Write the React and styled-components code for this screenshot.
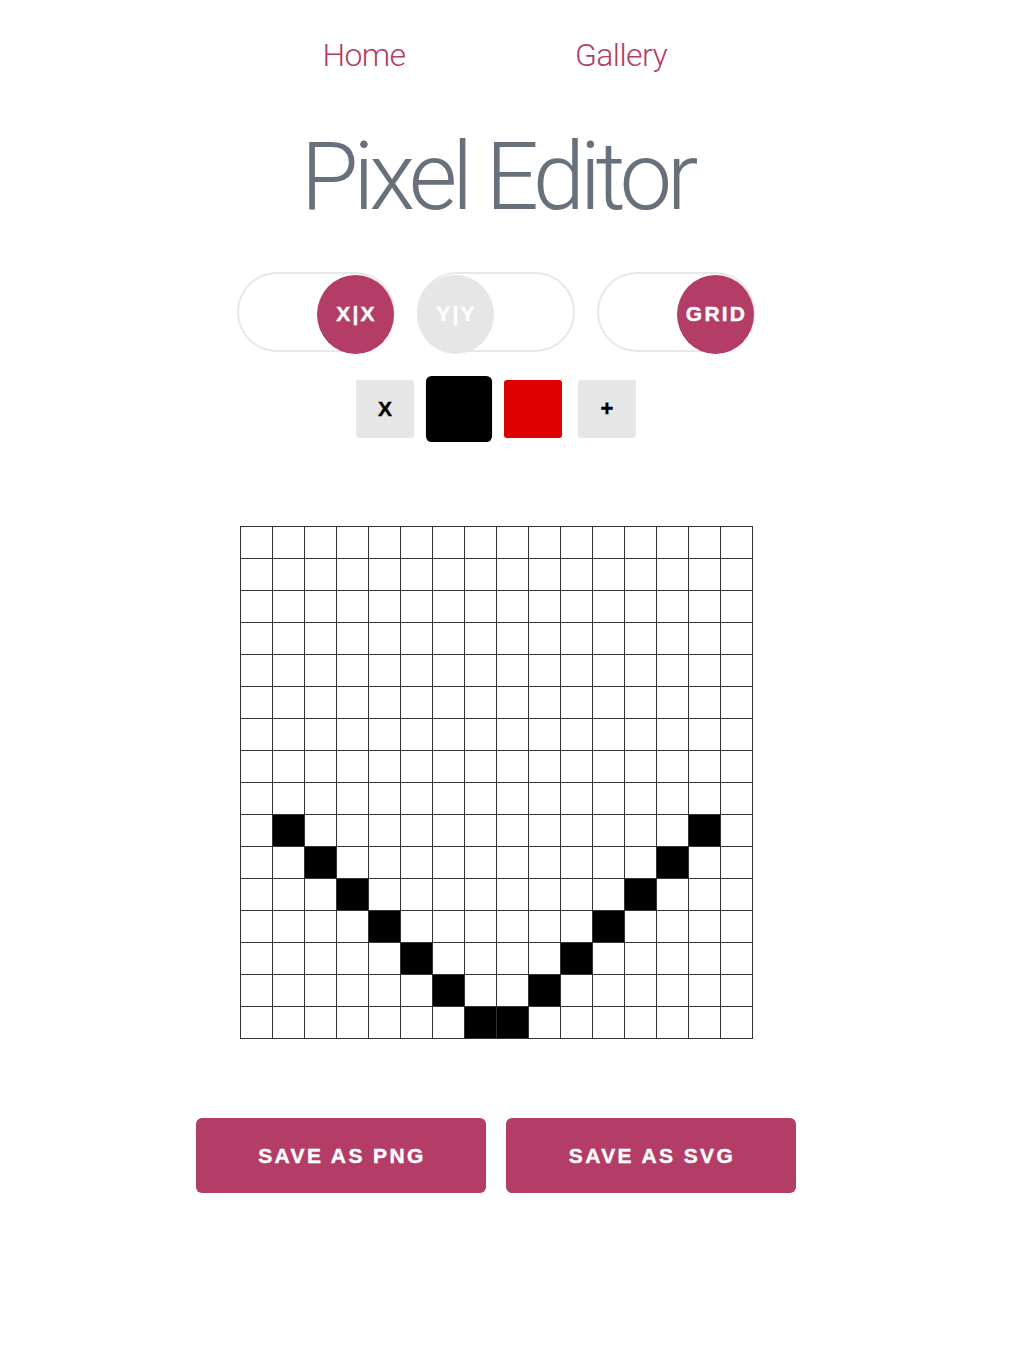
import React from "react";
import styled, { createGlobalStyle } from "styled-components";

const PINK = "#b33d66";

const Global = createGlobalStyle`
  html, body { margin: 0; padding: 0; background: #fff; }
  body { font-family: "Liberation Sans", Arial, sans-serif; }
`;

const Page = styled.div`
  width: 992px;
  display: flex;
  flex-direction: column;
  align-items: center;
  padding-top: 39px;
  padding-bottom: 150px;
`;

const Nav = styled.nav`
  display: flex;
  padding-right: 7px;
`;

const NavLink = styled.a`
  width: 257px;
  text-align: center;
  font-family: Roboto, "Liberation Sans", sans-serif;
  font-weight: 300;
  font-size: 32px;
  line-height: 32px;
  letter-spacing: -0.6px;
  color: ${PINK};
  text-decoration: none;
  cursor: pointer;
`;

const Title = styled.h1`
  margin: 59px 0 0;
  font-family: Roboto, "Liberation Sans", sans-serif;
  font-weight: 300;
  font-size: 94px;
  line-height: 94px;
  letter-spacing: -5.3px;
  color: #68717b;
  padding-left: 2px;
`;

const ToggleRow = styled.div`
  display: flex;
  gap: 22px;
  margin-top: 48px;
`;

const Pill = styled.div`
  width: 158px;
  height: 80px;
  box-sizing: border-box;
  border: 2px solid #e8e8e8;
  border-radius: 40px;
  display: flex;
  align-items: center;
  justify-content: ${(p) => (p.$on ? "flex-end" : "flex-start")};
`;

const Knob = styled.div`
  width: 77px;
  height: 79px;
  flex: none;
  margin: ${(p) => (p.$on ? "4px -1px 0 0" : "4px 0 0 -2px")};
  border-radius: 50%;
  background: ${(p) => (p.$on ? PINK : "#e6e6e6")};
  color: #fff;
  display: flex;
  align-items: center;
  justify-content: center;
  font-family: "Liberation Sans", Arial, sans-serif;
  font-weight: 700;
  font-size: 21px;
  letter-spacing: 2.2px;
  -webkit-text-stroke: 0.4px #fff;
  padding-left: 2px;
  box-sizing: border-box;
`;

const Palette = styled.div`
  display: flex;
  gap: 16px;
  margin-top: 28px;
`;

const Swatch = styled.button`
  width: 58px;
  height: 58px;
  border: none;
  padding: 0;
  background: ${(p) => p.$color};
  transform: ${(p) => (p.$active ? "scale(1.14)" : "none")};
  border-radius: ${(p) => (p.$active ? "5px" : "3px")};
  font-family: "Liberation Sans", Arial, sans-serif;
  font-weight: 700;
  font-size: ${(p) => (p.$small ? "22px" : "21px")};
  -webkit-text-stroke: 0.4px #000;
  color: #000;
  display: flex;
  align-items: center;
  justify-content: center;
`;

const Board = styled.div`
  margin-top: 88px;
  display: grid;
  grid-template-columns: repeat(16, 32px);
  grid-auto-rows: 32px;
  border-left: 1px solid #333;
  border-top: 1px solid #333;
`;

const Cell = styled.div`
  box-sizing: border-box;
  border-right: 1px solid #333;
  border-bottom: 1px solid #333;
  background: ${(p) => (p.$filled ? "#000" : "#fff")};
`;

const Actions = styled.div`
  display: flex;
  gap: 20px;
  margin-top: 79px;
`;

const SaveButton = styled.button`
  width: 290px;
  height: 75px;
  border: none;
  border-radius: 6px;
  background: ${PINK};
  color: #fff;
  font-family: "Liberation Sans", Arial, sans-serif;
  font-weight: 700;
  font-size: 21px;
  letter-spacing: 2.4px;
  -webkit-text-stroke: 0.4px #fff;
  padding: 0 0 0 2px;
`;

const filled = new Set();
[
  [9, 1], [9, 14],
  [10, 2], [10, 13],
  [11, 3], [11, 12],
  [12, 4], [12, 11],
  [13, 5], [13, 10],
  [14, 6], [14, 9],
  [15, 7], [15, 8],
].forEach(([r, c]) => filled.add(r * 16 + c));

const toggles = [
  { label: "X|X", on: true },
  { label: "Y|Y", on: false },
  { label: "GRID", on: true },
];

export default function App() {
  return (
    <>
      <Global />
      <Page>
        <Nav>
          <NavLink>Home</NavLink>
          <NavLink>Gallery</NavLink>
        </Nav>
        <Title>Pixel Editor</Title>
        <ToggleRow>
          {toggles.map((t) => (
            <Pill key={t.label} $on={t.on}>
              <Knob $on={t.on}>{t.label}</Knob>
            </Pill>
          ))}
        </ToggleRow>
        <Palette>
          <Swatch $color="#e6e6e6">X</Swatch>
          <Swatch $color="#000" $active />
          <Swatch $color="#dd0000" />
          <Swatch $color="#e6e6e6" $small>+</Swatch>
        </Palette>
        <Board>
          {Array.from({ length: 256 }, (_, i) => (
            <Cell key={i} $filled={filled.has(i)} />
          ))}
        </Board>
        <Actions>
          <SaveButton>SAVE AS PNG</SaveButton>
          <SaveButton>SAVE AS SVG</SaveButton>
        </Actions>
      </Page>
    </>
  );
}
